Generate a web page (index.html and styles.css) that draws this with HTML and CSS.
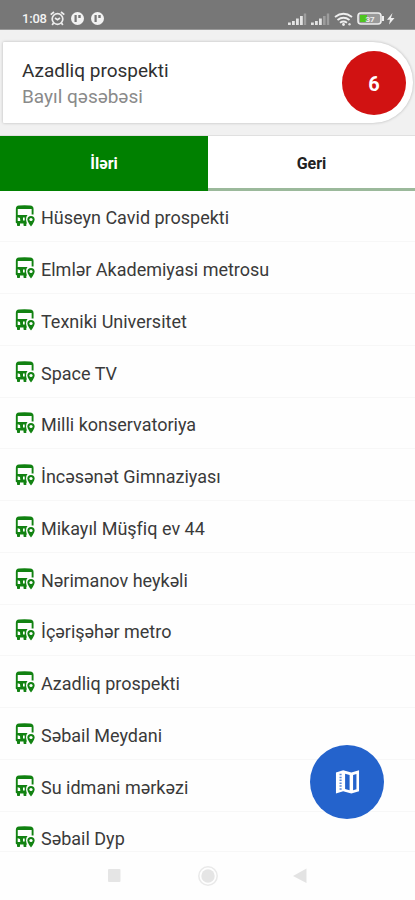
FILE: index.html
```html
<!DOCTYPE html>
<html lang="az">
<head>
<meta charset="utf-8">
<title>Azadliq prospekti</title>
<link rel="stylesheet" href="styles.css">
</head>
<body>
<svg class="defs" aria-hidden="true">
  <symbol id="bus" viewBox="0 0 20 22">
    <path d="M1.800 18V4Q1.800 1.800 4 1.500Q9.500 .9 15 1.500Q17.600 1.800 17.600 4V9.500" fill="none" stroke="currentColor" stroke-width="1.900"/>
    <path d="M2 2Q9.500 .8 17 2V4H2Z" fill="currentColor"/>
    <path d="M1 10H12.500Q10.800 12 11 14.500Q11.300 16.500 12 18.600H5V20.300Q5 21 4.300 21H2.700Q2 21 2 20.300V18.600Q.9 18.200 .9 17Z" fill="currentColor"/>
    <path d="M2.700 12.300L5 13L5.300 16H2.700ZM8 12.500H9.700V15.500H8Z" fill="#fff"/>
    <path d="M8.500 18H11.300V21H9.300Q8.500 21 8.500 20.300Z" fill="currentColor"/>
    <path d="M16 11A3.600 3.600 0 0 1 19.600 14.600C19.600 17.200 16 21.500 16 21.500S12.400 17.200 12.400 14.600A3.600 3.600 0 0 1 16 11Z" fill="currentColor"/>
    <circle cx="16" cy="14.500" r="1.600" fill="#fff"/>
  </symbol>
</svg>
<header class="status">
  <span class="clock">1:08</span>
  <svg class="alarm" viewBox="0 0 15 15"><g fill="none" stroke="#eee" stroke-width="1.700"><circle cx="7.500" cy="8" r="5.300"/><path d="M.7 3.700L4 1M11 1L14.300 3.700M5 7L7.500 8.800L10 7M3.500 12L2.200 14M11.500 12L12.800 14"/></g></svg>
  <svg class="dot" viewBox="0 0 13 13"><circle cx="6.500" cy="6.500" r="6.500" fill="#f2f2f2"/><path d="M3.500 3H5.700V10H3.500ZM7.300 3H9.700V6H7.300Z" fill="#777"/></svg>
  <svg class="dot second" viewBox="0 0 13 13"><circle cx="6.500" cy="6.500" r="6.500" fill="#f2f2f2"/><path d="M3.500 3H5.700V10H3.500ZM7.300 3H9.700V6H7.300Z" fill="#777"/></svg>
  <svg class="system" viewBox="0 0 107 15">
    <g fill="#e4e4e4"><path d="M0 10.500h2.800V13H0zM4 9h2.800v4H4zM8 6.500h2.800V13H8zM12 4h2.800v9H12zM23 10.500h2.800V13H23zM27 9h2.800v4H27zM31 6.500h2.800V13H31z"/><path d="M15.800 1.500h2.400V13h-2.400zM35 4h2.600v9H35zM38.800 1.500h2.400V13h-2.400z" opacity=".35"/></g>
    <g fill="none" stroke="#eee" stroke-width="1.900"><path d="M47 5Q55.500-1.500 64 5M49.500 8Q55.500 3.500 61.500 8M52 10.800Q55.500 8.300 59 10.800"/></g>
    <circle cx="55.500" cy="12.500" r="1.400" fill="#eee"/><circle cx="61.500" cy="12.300" r="1.200" fill="#ddd"/>
    <rect x="70" y="1" width="23" height="11" rx="3" fill="#999" stroke="#eee" stroke-width="1.600"/>
    <path d="M72 3h7v7h-7z" fill="#4fc51f"/><path d="M94 4h2v5h-2z" fill="#eee"/>
    <text x="77.500" y="9.500" class="charge">37</text>
    <path d="M104.500 1L99 7.700H102L101 12.500L106.500 6H103Z" fill="#eee"/>
  </svg>
</header>
<section class="banner">
  <div class="route">
    <div class="names"><div class="from">Azadliq prospekti</div><div class="to">Bayıl qəsəbəsi</div></div>
    <div class="number">6</div>
  </div>
</section>
<nav class="tabs"><div class="tab active">İləri</div><div class="tab">Geri</div></nav>
<main class="stops">
  <div class="stop"><svg><use href="#bus"/></svg><span>Hüseyn Cavid prospekti</span></div>
  <div class="stop"><svg><use href="#bus"/></svg><span>Elmlər Akademiyasi metrosu</span></div>
  <div class="stop"><svg><use href="#bus"/></svg><span>Texniki Universitet</span></div>
  <div class="stop"><svg><use href="#bus"/></svg><span>Space TV</span></div>
  <div class="stop"><svg><use href="#bus"/></svg><span>Milli konservatoriya</span></div>
  <div class="stop"><svg><use href="#bus"/></svg><span>İncəsənət Gimnaziyası</span></div>
  <div class="stop"><svg><use href="#bus"/></svg><span>Mikayıl Müşfiq ev 44</span></div>
  <div class="stop"><svg><use href="#bus"/></svg><span>Nərimanov heykəli</span></div>
  <div class="stop"><svg><use href="#bus"/></svg><span>İçərişəhər metro</span></div>
  <div class="stop"><svg><use href="#bus"/></svg><span>Azadliq prospekti</span></div>
  <div class="stop"><svg><use href="#bus"/></svg><span>Səbail Meydani</span></div>
  <div class="stop"><svg><use href="#bus"/></svg><span>Su idmani mərkəzi</span></div>
  <div class="stop last"><svg><use href="#bus"/></svg><span>Səbail Dyp</span></div>
</main>
<div class="map-button"><svg viewBox="0 0 26 26"><path d="M1 3L8.500 .8L17 3L25 .8V22.500L17 25L8.500 22.500L1 25Z" fill="#fff"/><path d="M10.500 4.500L15.200 5.700V21.500L10.500 20.200ZM18.800 5.700L22.300 4.700V20.500L18.800 21.500Z" fill="#2463cc"/><path d="M5.800 4.500V21.500" stroke="#2463cc" stroke-width="2.200" stroke-dasharray="1.500 1.500" opacity=".75"/></svg></div>
<footer class="navbar"><svg viewBox="0 0 415 48"><rect x="108" y="17" width="12.500" height="13" rx="1" fill="#e5e5e5"/><circle cx="208" cy="24" r="9.200" fill="none" stroke="#e9e9e9" stroke-width="1.500"/><circle cx="208" cy="24" r="6.700" fill="#e5e5e5"/><path d="M293 24L306.500 16.500V31Z" fill="#e3e3e3"/></svg></footer>
</body>
</html>
```
FILE: styles.css
```css
* { box-sizing: border-box; }
body {
  margin: 0;
  width: 415px;
  height: 900px;
  overflow: hidden;
  position: relative;
  display: flex;
  flex-direction: column;
  background: #fefefe;
  font-family: Roboto, "Noto Sans", sans-serif;
}
svg { display: block; flex: none; }
.defs { position: absolute; width: 0; height: 0; }
.status {
  height: 30px;
  flex: none;
  display: flex;
  align-items: flex-start;
  padding: 11px 0 0 22px;
  background: #777;
  border-bottom: 1px solid #999;
}
.clock { width: 28px; font-size: 13px; font-weight: 500; line-height: 16px; color: #f3f3f3; letter-spacing: -.2px; }
.alarm { width: 15px; height: 15px; }
.dot { width: 13px; height: 13px; margin: 1px 0 0 6px; }
.second { margin-left: 6.500px; }
.system { width: 107px; height: 15px; margin: 1px 0 0 184.500px; }
.charge { font-size: 8px; font-weight: 700; fill: #eee; }
.banner { height: 106px; flex: none; padding: 12px 2px 0 3px; background: #f1f1f1; border-bottom: 1px solid #e0e0e0; }
.route {
  height: 81px;
  display: flex;
  align-items: center;
  justify-content: space-between;
  padding: 0 7px 0 19px;
  background: #fff;
  border-radius: 1px 40px 40px 1px;
  box-shadow: 0 0 3px rgba(0, 0, 0, .25);
}
.names { padding-top: 3px; }
.from, .to { font-size: 19px; line-height: 26px; white-space: nowrap; }
.from { color: #303030; }
.to { color: #8a8a8a; }
.number { width: 64px; height: 64px; border-radius: 50%; background: #d11212; color: #fff; font-size: 20px; font-weight: 700; line-height: 66px; text-align: center; }
.tabs { height: 54.500px; flex: none; display: flex; }
.tab { flex: 1; text-align: center; font-size: 16px; font-weight: 700; line-height: 55px; color: #222; background: #fff; border-bottom: 3px solid #9bb99b; }
.active { flex: 0 0 208px; background: #008000; color: #fff; border-bottom-color: #008000; }
.stops { display: flex; flex-direction: column; }
.stop { height: 51.750px; flex: none; display: flex; align-items: center; gap: 6px; padding: 4px 0 0 15px; border-bottom: 1px solid #f7f7f7; color: #3a3a3a; font-size: 18px; white-space: nowrap; }
.stop svg { width: 20px; height: 22px; margin-bottom: 3px; color: #128212; }
.last { height: 40px; align-items: flex-start; padding-top: 14px; }
.last span { padding-top: 2px; }
.map-button { position: absolute; left: 310px; top: 745px; width: 74px; height: 74px; border-radius: 50%; background: #2463cc; display: flex; align-items: center; justify-content: center; }
.map-button svg { width: 25px; height: 26px; }
.navbar { height: 48px; margin-top: auto; flex: none; background: #fefefe; }
.navbar svg { width: 415px; height: 48px; }
```
